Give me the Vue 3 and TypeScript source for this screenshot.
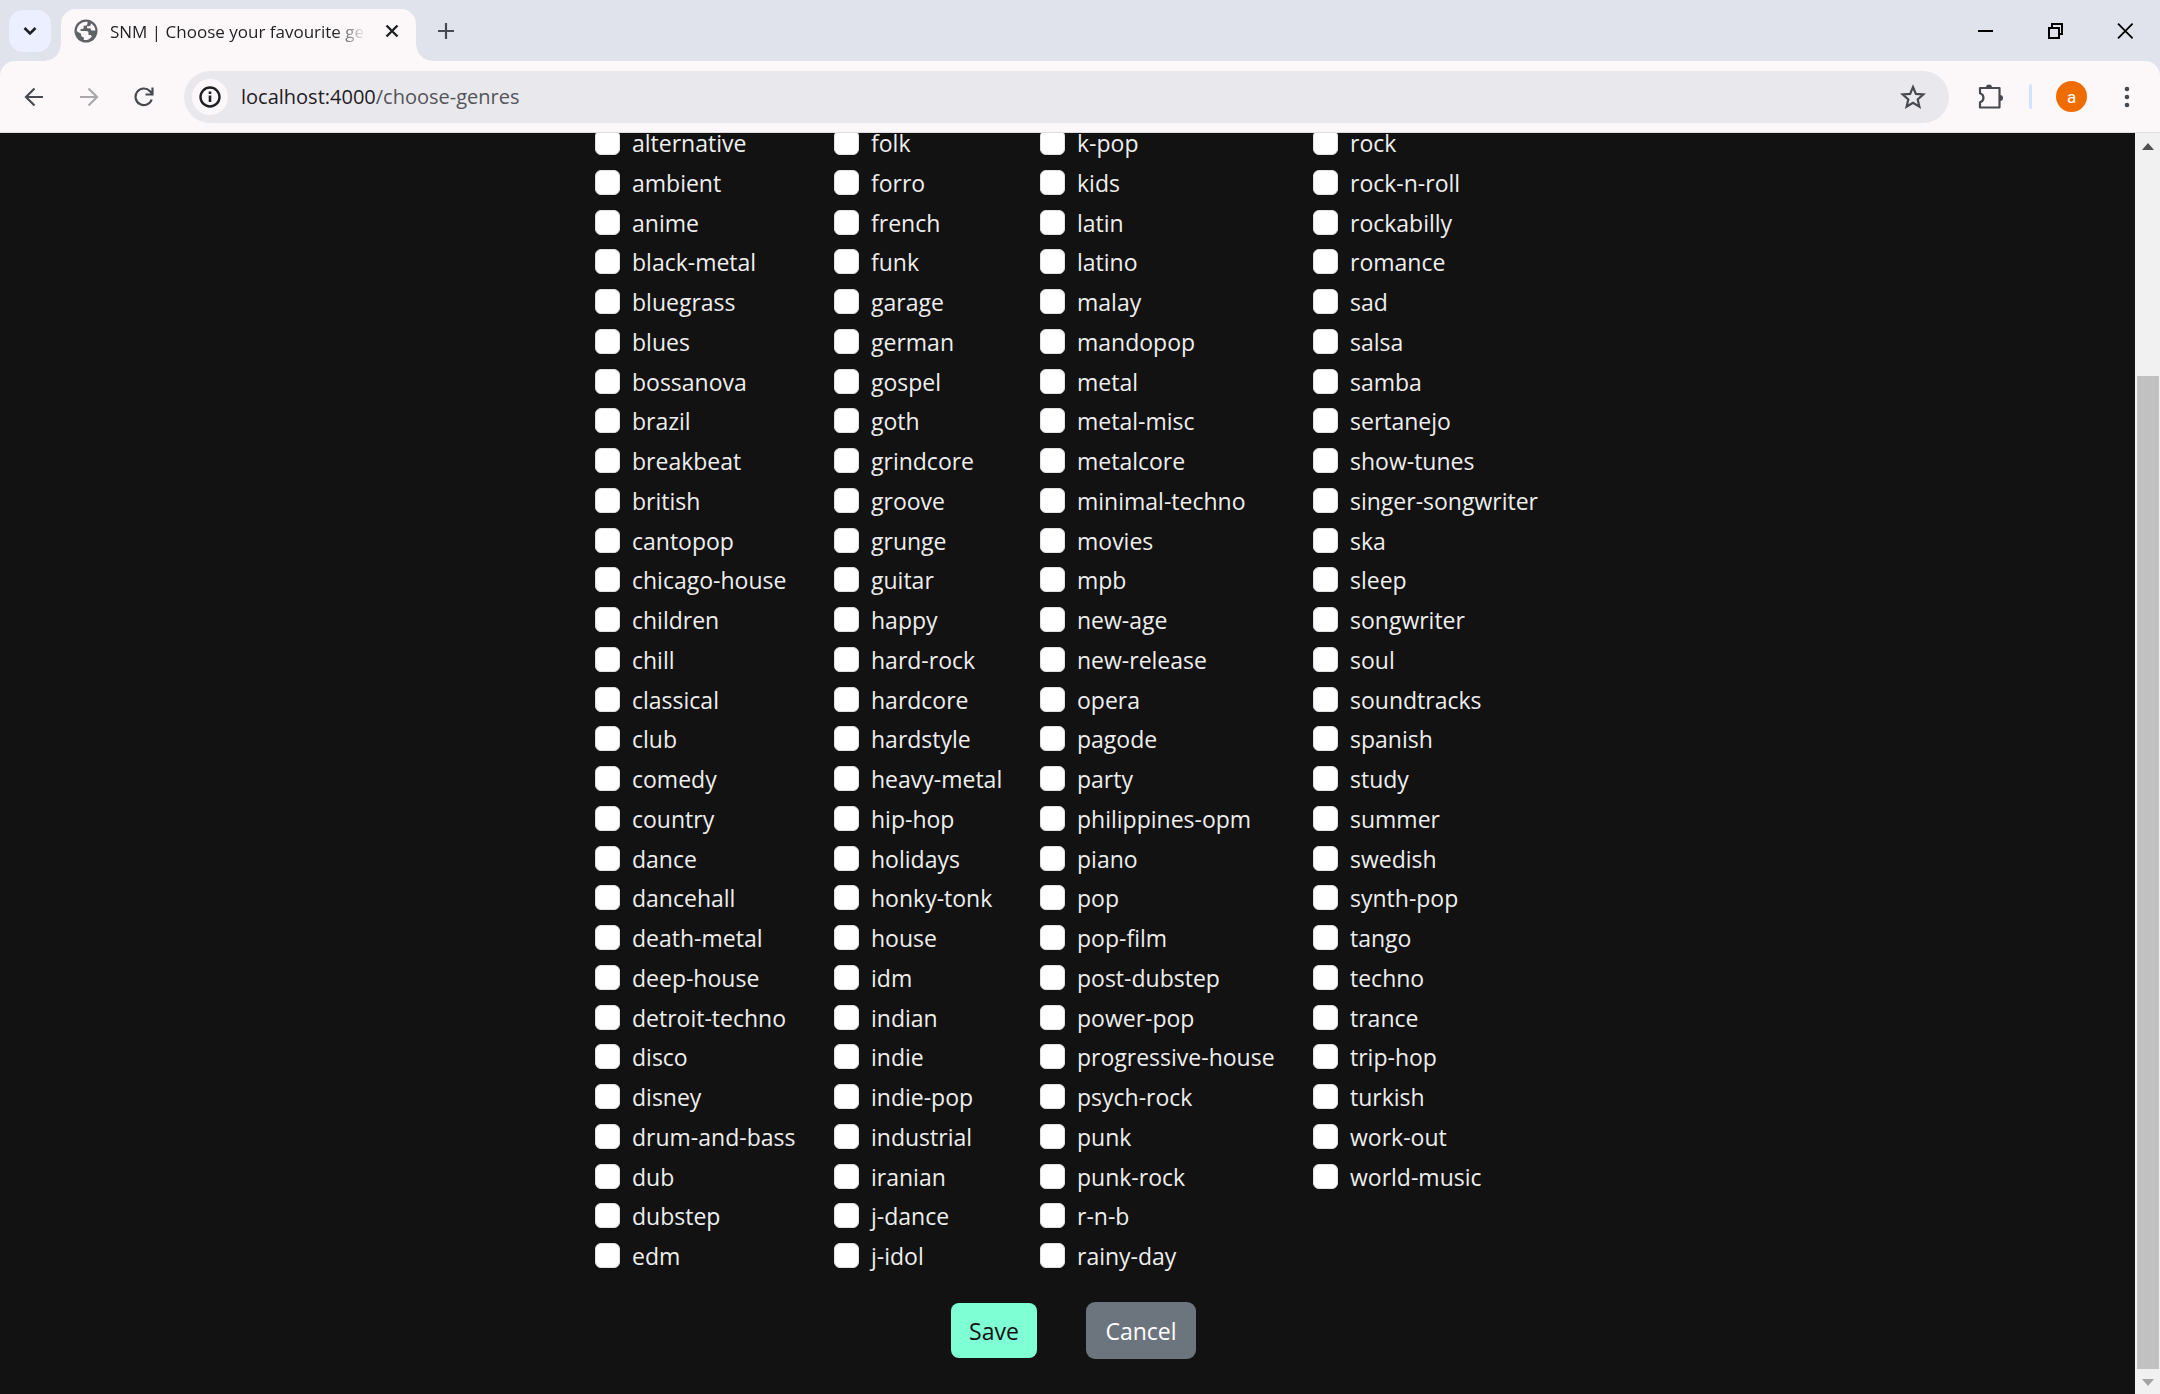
<script setup lang="ts">
import { ref } from 'vue'

const columns: string[][] = [
  'alternative ambient anime black-metal bluegrass blues bossanova brazil breakbeat british cantopop chicago-house children chill classical club comedy country dance dancehall death-metal deep-house detroit-techno disco disney drum-and-bass dub dubstep edm',
  'folk forro french funk garage german gospel goth grindcore groove grunge guitar happy hard-rock hardcore hardstyle heavy-metal hip-hop holidays honky-tonk house idm indian indie indie-pop industrial iranian j-dance j-idol',
  'k-pop kids latin latino malay mandopop metal metal-misc metalcore minimal-techno movies mpb new-age new-release opera pagode party philippines-opm piano pop pop-film post-dubstep power-pop progressive-house psych-rock punk punk-rock r-n-b rainy-day',
  'rock rock-n-roll rockabilly romance sad salsa samba sertanejo show-tunes singer-songwriter ska sleep songwriter soul soundtracks spanish study summer swedish synth-pop tango techno trance trip-hop turkish work-out world-music',
].map((names) => names.split(' '))

const chosen = ref<string[]>([])
const address = ref('localhost:4000/choose-genres')
</script>

<template>
  <div class="window">
    <header class="tabs">
      <button class="search-tabs" aria-label="Search tabs">
        <svg width="14" height="10" viewBox="0 0 14 10"><path d="M1.5 2 7 7.500 12.500 2" fill="none" stroke="#1f2024" stroke-width="2.600" /></svg>
      </button>
      <div class="tab">
        <svg class="favicon" width="24" height="24" viewBox="0 0 24 24">
          <circle cx="12" cy="12" r="11.500" fill="#5f6368" />
          <path d="M2.800 12.200C2.800 7 6.800 2.700 12 2.700h1.500v1.600c0 1.500-.9 2.400-2.300 2.400H9.600v2c0 .9-.6 1.400-1.500 1.400H6.600v1.900h5.600c1.500 0 2.300.8 2.300 2.200v1.800h1.300c1.100 0 1.800.6 2.100 1.500C15.800 20.300 13 21.500 9.800 21v-2.800c-1.700 0-2.700-.9-2.700-2.500v-1z" fill="#fcf8f9" />
          <path d="M16.800 4.200c2.700 1.600 4.400 4.300 4.600 7.300h-2.600c-1.600 0-2.300-.9-2.300-2.300H13V7.300h1.800c1.300 0 2-.8 2-2z" fill="#fcf8f9" />
        </svg>
        <span class="title">SNM | Choose your favourite genres</span>
        <button class="close-tab" aria-label="Close tab">
          <svg width="14" height="14" viewBox="0 0 14 14"><path d="m1.500 1.500 11 11m0-11-11 11" stroke="#1f2024" stroke-width="2.400" /></svg>
        </button>
      </div>
      <button class="new-tab" aria-label="New tab">
        <svg width="16" height="16" viewBox="0 0 16 16"><path d="M8 0v16M0 8h16" stroke="#474a50" stroke-width="2.200" /></svg>
      </button>
      <div class="controls">
        <button aria-label="Minimize"><svg width="16" height="16" viewBox="0 0 16 16"><path d="M1 8h15" stroke="#000" stroke-width="2" /></svg></button>
        <button aria-label="Restore"><svg width="16" height="16" viewBox="0 0 16 16"><path d="M2 5h10v10H2zM5 5V1h10v10h-3" fill="none" stroke="#000" stroke-width="2" /></svg></button>
        <button aria-label="Close"><svg width="16" height="16" viewBox="0 0 16 16"><path d="m1 .7 14.600 14.600m0-14.600L1 15.300" stroke="#000" stroke-width="1.800" /></svg></button>
      </div>
    </header>

    <nav class="toolbar">
      <button aria-label="Back"><svg width="20" height="20" viewBox="0 0 20 20"><path d="M19 10H2.500m8-8.500L2 10l8.500 8.500" fill="none" stroke="#474a50" stroke-width="2.200" /></svg></button>
      <button aria-label="Forward"><svg width="20" height="20" viewBox="0 0 20 20"><path d="M1 10h16.500m-8-8.500L18 10l-8.500 8.500" fill="none" stroke="#a9a8ab" stroke-width="2.200" /></svg></button>
      <button aria-label="Reload"><svg width="20" height="20" viewBox="0 0 20 20"><path d="M17.700 12.500A8.300 8.300 0 1 1 16 4.200l2.300 2.500M18.500.5v7h-7" fill="none" stroke="#474a50" stroke-width="2.200" /></svg></button>
      <div class="omnibox">
        <button class="info" aria-label="Site information">
          <svg width="22" height="22" viewBox="0 0 22 22"><circle cx="11" cy="11" r="9.500" fill="none" stroke="#1f2024" stroke-width="2.400" /><path d="M11 9.500v6.500M11 5.500V8" stroke="#1f2024" stroke-width="2.600" /></svg>
        </button>
        <label class="address">
          <input v-model="address" aria-label="Address" spellcheck="false" />
          <span class="url" aria-hidden="true">localhost:4000<span class="path">/choose-genres</span></span>
        </label>
        <button class="star" aria-label="Bookmark this tab">
          <svg width="26" height="26" viewBox="0 0 26 26"><path d="m13 3 2.900 6.900 7.400.6-5.600 4.900 1.700 7.300L13 18.800l-6.400 3.900 1.700-7.300-5.600-4.900 7.400-.6z" fill="none" stroke="#474a50" stroke-width="2.200" /></svg>
        </button>
      </div>
      <button class="extensions" aria-label="Extensions">
        <svg width="26" height="26" viewBox="0 0 26 26"><path d="M2 4h19.500v19.500H2v-5.200c4.600-1.600 4.600-7.400 0-9z" fill="none" stroke="#474a50" stroke-width="2.200" stroke-linejoin="round" /><path d="M8 3.500a3 3 0 0 1 6 0zM22 11a3 3 0 0 1 0 6z" fill="#474a50" /></svg>
      </button>
      <span class="divider"></span>
      <button class="avatar" aria-label="Profile">a</button>
      <button class="menu" aria-label="Menu"><svg width="6" height="22" viewBox="0 0 6 22"><g fill="#474a50"><circle cx="3" cy="3" r="2.300" /><circle cx="3" cy="11" r="2.300" /><circle cx="3" cy="19" r="2.300" /></g></svg></button>
    </nav>

    <div class="view">
      <main class="page">
        <form @submit.prevent>
          <div class="genres">
            <ul v-for="(column, index) in columns" :key="index">
              <li v-for="genre in column" :key="genre">
                <label><input v-model="chosen" type="checkbox" :value="genre" />{{ genre }}</label>
              </li>
            </ul>
          </div>
          <div class="actions">
            <button class="save" type="submit">Save</button>
            <button class="cancel" type="button">Cancel</button>
          </div>
        </form>
      </main>
      <div class="scrollbar" aria-hidden="true">
        <svg width="12" height="7" viewBox="0 0 12 7"><path d="m0 7 6-7 6 7z" fill="#505050" /></svg>
        <span class="thumb"></span>
        <svg width="12" height="7" viewBox="0 0 12 7"><path d="m0 0 6 7 6-7z" fill="#a3a3a3" /></svg>
      </div>
    </div>
  </div>
</template>

<style>
body {
  margin: 0;
  overflow: hidden;
}
</style>

<style scoped>
* {
  box-sizing: border-box;
}
.window {
  display: flex;
  flex-direction: column;
  height: 100vh;
  font-family: 'Open Sans', 'Noto Sans', sans-serif;
  background: #e0e3ec;
}
button {
  display: flex;
  align-items: center;
  justify-content: center;
  padding: 0;
  border: 0;
  background: none;
  font: inherit;
}
svg {
  display: block;
  flex: none;
}
.tabs {
  display: flex;
  align-items: flex-start;
  flex: none;
  height: 61px;
}
.search-tabs {
  width: 42px;
  height: 42px;
  margin: 10px 10px 0 9px;
  border-radius: 14px;
  background: #ecefff;
}
.tab {
  position: relative;
  display: flex;
  align-items: center;
  width: 355px;
  height: 52px;
  margin-top: 9px;
  padding: 0 17px 8px 13px;
  border-radius: 15px 15px 0 0;
  background: #fcf8f9;
}
.tab::before,
.tab::after {
  content: '';
  position: absolute;
  bottom: 0;
  width: 16px;
  height: 16px;
}
.tab::before {
  right: 100%;
  background: radial-gradient(circle at 0 0, transparent 15px, #fcf8f9 16px);
}
.tab::after {
  left: 100%;
  background: radial-gradient(circle at 100% 0, transparent 15px, #fcf8f9 16px);
}
.title {
  flex: 1;
  margin: 2px 19px 0 12px;
  overflow: hidden;
  white-space: nowrap;
  font-size: 17px;
  line-height: 24px;
  color: #1f2024;
  mask-image: linear-gradient(to right, #000 calc(100% - 32px), transparent);
}
.new-tab {
  width: 42px;
  height: 42px;
  margin: 10px 0 0 9px;
}
.controls {
  display: flex;
  margin-left: auto;
}
.controls button {
  width: 70px;
  height: 61px;
}
.toolbar {
  display: flex;
  align-items: center;
  flex: none;
  height: 72px;
  padding: 0 14px 0 6px;
  border-bottom: 1px solid #e0dde0;
  border-radius: 15px 15px 0 0;
  background: #fcf8f9;
}
.toolbar > button {
  width: 55px;
  height: 52px;
}
.omnibox {
  display: flex;
  align-items: center;
  flex: 1;
  height: 52px;
  margin-left: 13px;
  padding: 0 23px 0 8px;
  border-radius: 26px;
  background: #e9e8ed;
}
.info {
  width: 36px;
  height: 36px;
  border-radius: 50%;
  background: #fcf8f9;
}
.address {
  display: grid;
  flex: 1;
  margin-left: 13px;
  font-size: 20px;
  line-height: 28px;
}
.address input,
.url {
  grid-area: 1 / 1;
}
.address input {
  min-width: 0;
  padding: 0;
  border: 0;
  outline: 0;
  background: none;
  font: inherit;
  color: transparent;
}
.url {
  color: #1f2024;
  pointer-events: none;
}
.path {
  color: #54545a;
}
.toolbar .extensions {
  width: 26px;
  margin: 0 25px 0 29px;
}
.divider {
  width: 3px;
  height: 25px;
  border-radius: 2px;
  background: #d3e3fd;
}
.toolbar .avatar {
  width: 31px;
  height: 31px;
  margin-left: 24px;
  border-radius: 50%;
  background: #ef6c00;
  color: #fff;
  font-family: Roboto, sans-serif;
  font-size: 17px;
}
.toolbar .menu {
  width: 38px;
  margin-left: 21px;
}
.view {
  display: flex;
  flex: 1;
  min-height: 0;
}
.page {
  display: flex;
  flex-direction: column;
  flex: 1;
  justify-content: flex-end;
  overflow: hidden;
  background: #121212;
  color: #eee;
}
.genres {
  display: grid;
  grid-template-columns: 239px 206px 273px 227px;
  justify-content: center;
  font-size: 23px;
  line-height: 36px;
}
ul {
  display: grid;
  grid-template-rows: repeat(29, 1fr);
  height: 1153px;
  margin: 0;
  padding: 0;
  list-style: none;
}
li label {
  display: flex;
  gap: 12px;
  white-space: nowrap;
}
li input {
  appearance: none;
  width: 25px;
  height: 25px;
  margin: 5px 0 0;
  border: 1px solid #dee2e6;
  border-radius: 6px;
  background: #fff;
}
li input:checked {
  background: #7fffd4;
}
.actions {
  display: flex;
  align-items: center;
  justify-content: center;
  gap: 49px;
  margin: 24px 0 35px;
  padding-left: 12px;
  font-size: 23px;
  line-height: 36px;
}
.save {
  width: 86px;
  height: 55px;
  border-radius: 8px;
  background: #7fffd4;
  color: #121212;
}
.cancel {
  width: 110px;
  height: 57px;
  border-radius: 9px;
  background: #6c757d;
  color: #fff;
}
.scrollbar {
  display: flex;
  flex-direction: column;
  align-items: center;
  flex: none;
  width: 25px;
  padding: 10px 0 8px;
  background: #f1f1f1;
}
.thumb {
  flex: 1;
  width: 22px;
  margin: 226px 0 10px;
  background: #c1c1c1;
}
</style>
